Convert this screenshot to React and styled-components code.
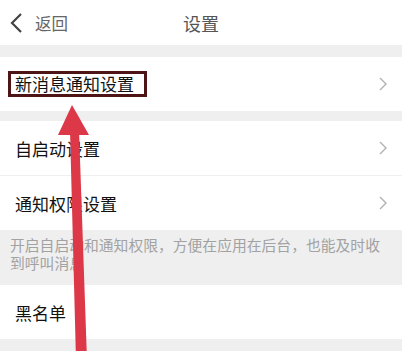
import React from "react"
import styled, { createGlobalStyle } from "styled-components"

const GlobalStyle = createGlobalStyle`
  html, body {
    margin: 0;
    padding: 0;
    background: #efefef;
  }
  body {
    font-family: "Noto Sans CJK SC", "Noto Sans", sans-serif;
  }
`

const Page = styled.div`
  position: relative;
  width: 402px;
  height: 351px;
  overflow: hidden;
  background: #efefef;
`

const Header = styled.div`
  position: relative;
  height: 45px;
  background: #fff;
  display: flex;
  align-items: center;
  justify-content: center;
  margin-bottom: 12px;
`

const BackButton = styled.div`
  position: absolute;
  left: 9px;
  top: 0;
  height: 45px;
  display: flex;
  align-items: center;
  gap: 12px;
  color: #666;
  font-size: 16.5px;
`

const Title = styled.div`
  font-size: 18px;
  color: #555;
`

const Group = styled.div`
  background: #fff;
  margin-bottom: ${p => p.$gap || 0}px;
`

const Row = styled.div`
  height: 54px;
  display: flex;
  align-items: center;
  justify-content: space-between;
  padding: 0 14px 0 15px;
  font-size: 17px;
  color: #111;
  border-top: ${p => (p.$divider ? "1px solid #efefef" : "none")};
`

const Highlight = styled.span`
  margin-left: -7px;
  padding: 0 10px 0 4px;
  line-height: 20px;
  border: 3px solid #4d1515;
`

const Note = styled.div`
  height: 55px;
  box-sizing: border-box;
  padding: 6px 18px 0 10px;
  font-size: 14.8px;
  line-height: 18px;
  color: #a2a2a2;
`

const Arrow = styled.svg`
  position: absolute;
  left: 0;
  top: 0;
  pointer-events: none;
`

const Chevron = () => (
  <svg width="10" height="16" viewBox="0 0 10 16">
    <path d="M2 2 L8 8 L2 14" fill="none" stroke="#b0b0b0" strokeWidth="1.4" />
  </svg>
)

const BackIcon = () => (
  <svg width="14" height="22" viewBox="0 0 14 22">
    <path d="M12 2 L3 11 L12 20" fill="none" stroke="#444" strokeWidth="2.2" />
  </svg>
)

const rows = [
  { id: "autostart", label: "自启动设置", divider: false },
  { id: "permission", label: "通知权限设置", divider: true },
]

export default function App() {
  return (
    <Page>
      <GlobalStyle />
      <Header>
        <BackButton>
          <BackIcon />
          返回
        </BackButton>
        <Title>设置</Title>
      </Header>

      <Group $gap={10}>
        <Row>
          <Highlight>新消息通知设置</Highlight>
          <Chevron />
        </Row>
      </Group>

      <Group>
        {rows.map(r => (
          <Row key={r.id} $divider={r.divider}>
            {r.label}
            <Chevron />
          </Row>
        ))}
      </Group>

      <Note>开启自启动和通知权限，方便在应用在后台，也能及时收到呼叫消息</Note>

      <Group>
        <Row>黑名单</Row>
      </Group>

      <Arrow width="402" height="351" viewBox="0 0 402 351">
        <polygon points="70,130 79,130 87,360 76,360" fill="#dc3848" />
        <polygon points="72,105 58,135 89,135" fill="#dc3848" />
      </Arrow>
    </Page>
  )
}
